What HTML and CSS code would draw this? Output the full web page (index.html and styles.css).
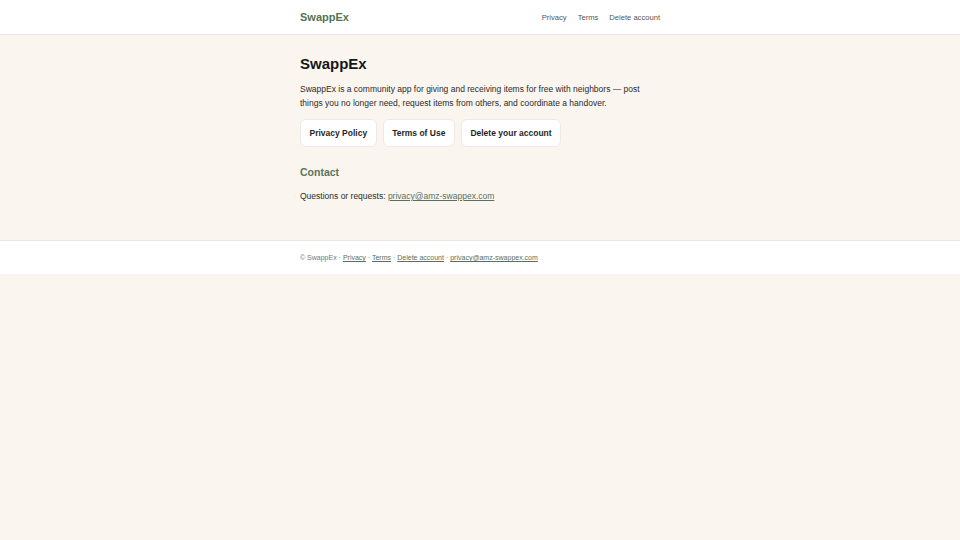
FILE: index.html
```html
<!DOCTYPE html>
<html lang="en">
<head>
<meta charset="utf-8">
<title>SwappEx</title>
<link rel="stylesheet" href="styles.css">
</head>
<body>
<header class="site-header">
  <div class="wrap header-inner">
    <a class="logo" href="#">SwappEx</a>
    <nav class="nav">
      <a href="#">Privacy</a>
      <a href="#">Terms</a>
      <a href="#">Delete account</a>
    </nav>
  </div>
</header>
<main class="wrap main">
  <h1 class="title">SwappEx</h1>
  <p class="intro">SwappEx is a community app for giving and receiving items for free with neighbors — post things you no longer need, request items from others, and coordinate a handover.</p>
  <div class="buttons">
    <a class="btn" href="#">Privacy Policy</a>
    <a class="btn" href="#">Terms of Use</a>
    <a class="btn" href="#">Delete your account</a>
  </div>
  <h2 class="section-title">Contact</h2>
  <p class="contact">Questions or requests: <a href="#">privacy@amz-swappex.com</a></p>
</main>
<footer class="site-footer">
  <p class="wrap footer-inner">© SwappEx · <a href="#">Privacy</a> · <a href="#">Terms</a> · <a href="#">Delete account</a> · <a href="#">privacy@amz-swappex.com</a></p>
</footer>
</body>
</html>
```
FILE: styles.css
```css
* { box-sizing: border-box; }
html, body {
  margin: 0;
  padding: 0;
  background: #faf6ef;
  font-family: "Liberation Sans", Arial, sans-serif;
  color: #1f1f1f;
}
.wrap {
  width: 360px;
  margin: 0 auto;
}
.site-header {
  background: #ffffff;
  border-bottom: 1px solid #ebe6df;
  height: 35px;
}
.header-inner {
  height: 34px;
  display: flex;
  align-items: center;
  justify-content: space-between;
}
.logo {
  font-size: 11px;
  font-weight: 700;
  color: #4f7553;
  text-decoration: none;
}
.nav {
  display: flex;
  gap: 11px;
}
.nav a {
  font-size: 7.6px;
  color: #555555;
  text-decoration: none;
}
.main {
  padding-top: 20px;
  padding-bottom: 37px;
}
.title {
  margin: 0;
  font-size: 15px;
  line-height: 18px;
  font-weight: 700;
  color: #161616;
}
.intro {
  margin: 9px 0 0;
  font-size: 8.5px;
  line-height: 14px;
  color: #2a2a2a;
}
.buttons {
  display: flex;
  gap: 6px;
  margin-top: 9px;
}
.btn {
  display: inline-flex;
  align-items: center;
  height: 28px;
  padding: 0 8.5px;
  background: #ffffff;
  border: 1px solid #eeeae3;
  border-radius: 6px;
  font-size: 8.5px;
  font-weight: 700;
  color: #1f1f1f;
  text-decoration: none;
}
.section-title {
  margin: 18px 0 0;
  font-size: 10.5px;
  line-height: 14px;
  font-weight: 700;
  color: #5b735c;
}
.contact {
  margin: 10px 0 0;
  font-size: 8.5px;
  line-height: 14px;
  color: #2a2a2a;
}
.contact a {
  color: #5b6f5d;
}
.site-footer {
  background: #ffffff;
  border-top: 1px solid #ebe6df;
  height: 34px;
}
.footer-inner {
  margin: 0 auto;
  line-height: 33px;
  font-size: 7px;
  color: #777777;
}
.footer-inner a {
  color: #5b6f5d;
}
```
